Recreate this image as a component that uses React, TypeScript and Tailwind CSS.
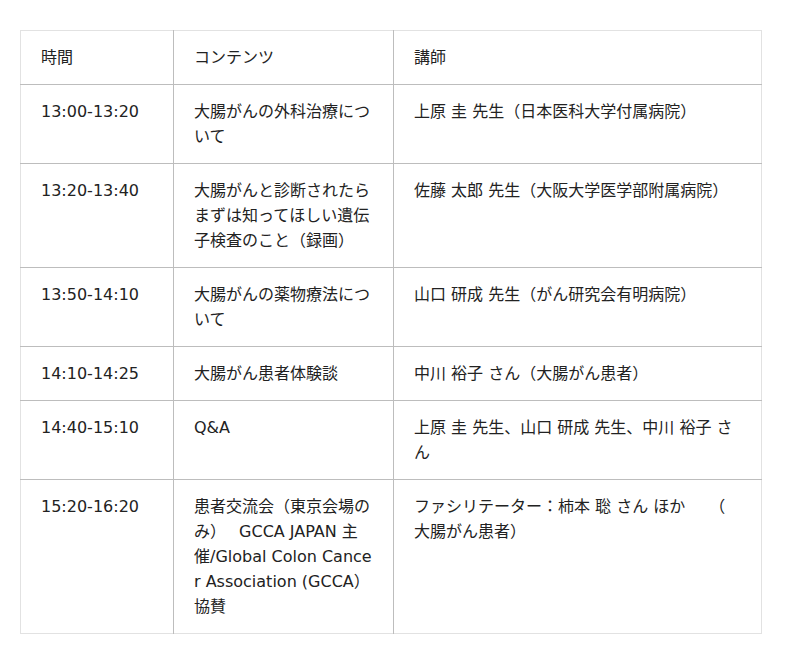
const rows: [string, string, string][] = [
  ["13:00-13:20", "大腸がんの外科治療について", "上原 圭 先生（日本医科大学付属病院）"],
  ["13:20-13:40", "大腸がんと診断されたらまずは知ってほしい遺伝子検査のこと（録画）", "佐藤 太郎 先生（大阪大学医学部附属病院）"],
  ["13:50-14:10", "大腸がんの薬物療法について", "山口 研成 先生（がん研究会有明病院）"],
  ["14:10-14:25", "大腸がん患者体験談", "中川 裕子 さん（大腸がん患者）"],
  ["14:40-15:10", "Q&A", "上原 圭 先生、山口 研成 先生、中川 裕子 さん"],
  [
    "15:20-16:20",
    "患者交流会（東京会場のみ）　 GCCA JAPAN 主催/Global Colon Cancer Association (GCCA）協賛",
    "ファシリテーター：柿本 聡 さん ほか　　（大腸がん患者）",
  ],
];

export default function App() {
  return (
    <div
      className="min-h-screen bg-white px-5 pt-[30px] text-[#222]"
      style={{ fontFamily: '"DejaVu Sans", "Noto Sans CJK JP", sans-serif' }}
    >
      <table className="w-[742px] table-fixed border-collapse border border-[#e2e2e2] text-base leading-[25px]">
        <colgroup>
          <col className="w-[153px]" />
          <col className="w-[220px]" />
          <col />
        </colgroup>
        <thead>
          <tr>
            <th className="border-b border-r border-[#bdbdbd] px-5 py-[14px] text-left align-top font-normal">時間</th>
            <th className="border-b border-r border-[#bdbdbd] px-5 py-[14px] text-left align-top font-normal">コンテンツ</th>
            <th className="border-b border-[#bdbdbd] px-5 py-[14px] text-left align-top font-normal">講師</th>
          </tr>
        </thead>
        <tbody>
          {rows.map(([time, content, lecturer], i) => (
            <tr key={time}>
              <td className={`border-r border-[#bdbdbd] px-5 py-[14px] align-top break-all [line-break:anywhere] ${i < rows.length - 1 ? "border-b" : ""}`}>{time}</td>
              <td className={`border-r border-[#bdbdbd] px-5 py-[14px] align-top break-all [line-break:anywhere] ${i < rows.length - 1 ? "border-b" : ""}`}>{content}</td>
              <td className={`border-[#bdbdbd] px-5 py-[14px] align-top break-all [line-break:anywhere] ${i < rows.length - 1 ? "border-b" : ""}`}>{lecturer}</td>
            </tr>
          ))}
        </tbody>
      </table>
    </div>
  );
}
